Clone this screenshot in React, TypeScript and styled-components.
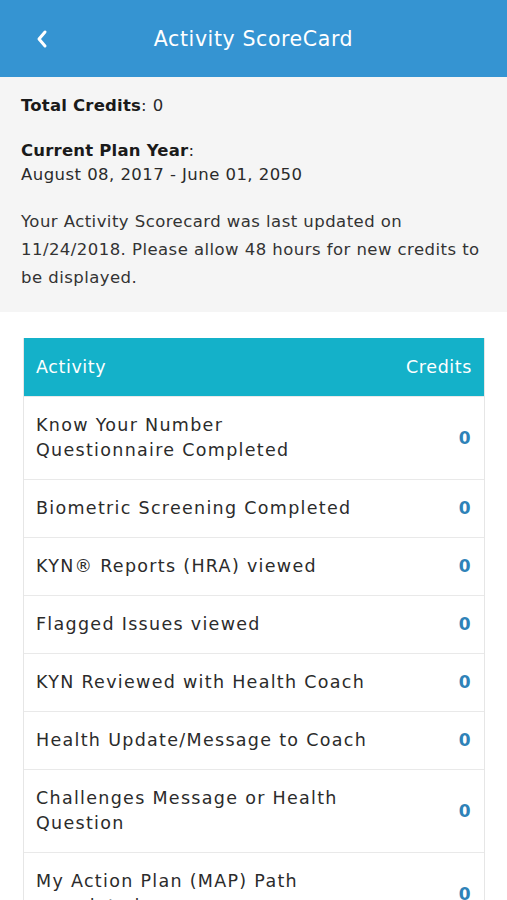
import styled, { createGlobalStyle } from 'styled-components';

const GlobalStyle = createGlobalStyle`
	html, body {
		margin: 0;
		padding: 0;
		background: #fff;
		font-family: 'DejaVu Sans', 'Open Sans', sans-serif;
		color: #2a2a2a;
	}
`;

const Page = styled.div`
	width: 507px;
	min-height: 900px;
	display: flex;
	flex-direction: column;
`;

const TopBar = styled.header`
	height: 77px;
	background: #3594d2;
	display: flex;
	align-items: center;
	justify-content: center;
	position: relative;
	color: #fff;
`;

const BackButton = styled.button`
	position: absolute;
	left: 30px;
	top: 27px;
	width: 24px;
	height: 24px;
	padding: 0;
	border: none;
	background: none;
	display: flex;
	align-items: center;
	justify-content: center;
`;

const Title = styled.h1`
	margin: 0;
	font-size: 20.5px;
	font-weight: 400;
	letter-spacing: 0.6px;
`;

const Summary = styled.section`
	background: #f5f5f5;
	padding: 17px 21px 20px;
	display: flex;
	flex-direction: column;
	gap: 21px;
	font-size: 16.5px;
	letter-spacing: 0.45px;
	line-height: 24px;
`;

const Line = styled.div``;

const Label = styled.span`
	font-weight: 700;
	letter-spacing: 0.2px;
	color: #1a1a1a;
`;

const Note = styled.p`
	margin: 0;
	line-height: 28px;
	color: #333;
`;

const Table = styled.div`
	margin: 26px 22px 0 23px;
	border: 1px solid #e6e6e6;
	border-top: none;
	display: flex;
	flex-direction: column;
`;

const HeadRow = styled.div`
	height: 58px;
	background: #14b1c9;
	color: #fff;
	display: flex;
	align-items: center;
	justify-content: space-between;
	padding: 0 12px;
	font-size: 17.5px;
	letter-spacing: 0.6px;
`;

const Row = styled.div`
	border-top: 1px solid #e9e9e9;
	display: flex;
	align-items: center;
	justify-content: space-between;
	padding: 16px 12px;
	font-size: 17.5px;
	letter-spacing: 1.3px;
	line-height: 25px;
	color: #2b2b2b;
`;

const Name = styled.div`
	max-width: 333px;
`;

const Score = styled.div`
	color: #2f82b8;
	font-weight: 700;
	font-size: 17px;
`;

const activities = [
	'Know Your Number Questionnaire Completed',
	'Biometric Screening Completed',
	'KYN® Reports (HRA) viewed',
	'Flagged Issues viewed',
	'KYN Reviewed with Health Coach',
	'Health Update/Message to Coach',
	'Challenges Message or Health Question',
	'My Action Plan (MAP) Path completed',
];

const App = () => (
	<Page>
		<GlobalStyle />
		<TopBar>
			<BackButton>
				<svg width="14" height="20" viewBox="0 0 14 20">
					<path d="M10 3 L4 10 L10 17" stroke="#fff" strokeWidth="3" fill="none" strokeLinecap="round" strokeLinejoin="round" />
				</svg>
			</BackButton>
			<Title>Activity ScoreCard</Title>
		</TopBar>
		<Summary>
			<Line>
				<Label>Total Credits</Label>: 0
			</Line>
			<Line>
				<Label>Current Plan Year</Label>:
				<br />
				August 08, 2017 - June 01, 2050
			</Line>
			<Note>
				Your Activity Scorecard was last updated on 11/24/2018. Please allow 48 hours for new credits to be displayed.
			</Note>
		</Summary>
		<Table>
			<HeadRow>
				<span>Activity</span>
				<span>Credits</span>
			</HeadRow>
			{activities.map((name) => (
				<Row key={name}>
					<Name>{name}</Name>
					<Score>0</Score>
				</Row>
			))}
		</Table>
	</Page>
);

export default App;
